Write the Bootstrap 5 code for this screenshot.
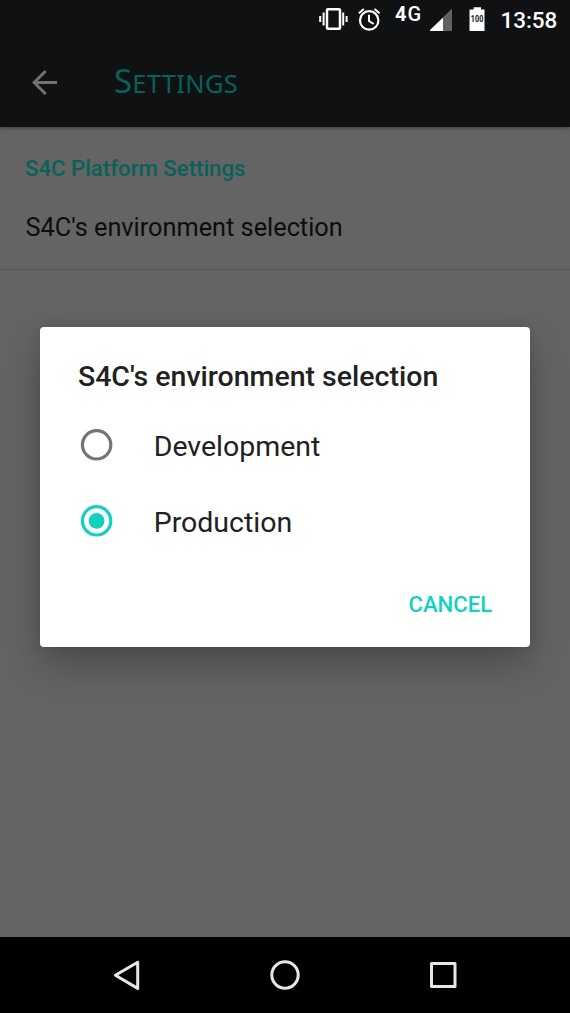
<!DOCTYPE html>
<html lang="en">
<head>
<meta charset="utf-8">
<meta name="viewport" content="width=device-width, initial-scale=1">
<title>Settings</title>
<link href="https://cdn.jsdelivr.net/npm/bootstrap@5.3.0/dist/css/bootstrap.min.css" rel="stylesheet">
<style>
body{font-family:Roboto,sans-serif;background:#646464;color:#212121;height:1013px;overflow:hidden}
svg{display:block;flex:none}
.screen{width:570px;height:1013px}
.status-bar{height:38px;padding-left:318.5px;color:#fff}
.app-head{background:#0f1113;box-shadow:0 1px 4px rgba(0,0,0,.4);height:126.5px}
.net-type{font:500 20px/22px Roboto,sans-serif;margin:3px 0 0 13.5px;letter-spacing:1px;width:35px}
.net-type b{font-weight:700}
.clock{font:500 22.5px/38px Roboto,sans-serif;margin:.5px 0 0 15.5px;letter-spacing:-.1px}
.tool-bar{height:88px;padding-left:32px}
.page-title{font:400 33px/88px "Noto Sans",sans-serif;color:#08625a;margin-left:56px}
.page-title span{font-size:25.5px;letter-spacing:.35px}
.section-title{font-size:22.2px;line-height:30px;font-weight:500;color:#08625a;padding:26px 25px 0}
.pref-row{font-size:25.3px;line-height:40px;color:#0d0d0d;padding:25px 25.5px 21px;border-bottom:1px solid #565656}
.nav-keys{height:76px;background:#000}
.choice-dialog{left:39.6px;top:327px;width:490.8px;height:320.3px;border:0;border-radius:4px;background:#fff;padding:32px 38.3px 0;box-shadow:0 18px 38px rgba(0,0,0,.25),0 0 12px rgba(0,0,0,.1)}
.dialog-heading{font-size:28.5px;line-height:36px;font-weight:500;margin:0 0 13px}
.choice{height:76px;font-size:28.5px;line-height:40px;cursor:pointer}
.choice-text{margin-left:39.8px;padding-top:1px}
.cancel-key{font-size:22.1px;line-height:30px;font-weight:500;color:#13d1be;border:0;padding:0;margin-top:28.5px}
.t{white-space:nowrap;display:inline-block}
</style>
</head>
<body>
<div class="screen position-relative d-flex flex-column">
  <header class="app-head flex-shrink-0">
    <div class="status-bar d-flex">
      <svg width="29" height="38" viewBox="0 0 29 38" fill="none" stroke="#fff" stroke-width="2"><rect x="8" y="9.3" width="13" height="19.4" rx="1" stroke-width="2.5"/><path d="M4.600 12.500v13M1.200 16v6M24.200 12.500v13M27.600 16v6"/></svg>
      <svg class="ms-2" width="26" height="38" viewBox="0 0 26 38" fill="none" stroke="#fff" stroke-width="2.2"><circle cx="13.2" cy="20.4" r="9.2"/><path d="M13 14.800v6.200l4.700 3M2.800 13.200l5-4.200M23.600 13.200l-5-4.200" stroke-width="2"/></svg>
      <span class="net-type"><b>4</b>G</span>
      <svg width="23" height="38" viewBox="0 0 23 38"><path d="M22 8.500V31H-1z" fill="#606162"/><path d="M13 17.700v13.300H-1z" fill="#fff"/></svg>
      <svg class="ms-3" width="16" height="38" viewBox="0 0 16 38"><path d="M4.700 7.300h7.300v2.100H15.500V31H.5V9.400h4.200z" fill="#fff"/><text x="8.1" y="22" font-family="Roboto,sans-serif" font-size="8.5" font-weight="700" fill="#111" text-anchor="middle" textLength="12.5" lengthAdjust="spacingAndGlyphs">100</text></svg>
      <span class="clock">13:58</span>
    </div>
    <div class="tool-bar d-flex align-items-center">
      <svg width="26" height="26" viewBox="0 0 26 26" fill="none" stroke="#717272" stroke-width="3"><path d="M25 13.500H2M13.700 2L2.200 13.500 13.700 25"/></svg>
      <h1 class="page-title mb-0">S<span>ETTINGS</span></h1>
    </div>
  </header>
  <main class="flex-grow-1">
    <div class="section-title"><span class="t">S4C Platform Settings</span></div>
    <div class="pref-row"><span class="t">S4C's environment selection</span></div>
  </main>
  <footer class="nav-keys flex-shrink-0 d-flex align-items-center">
    <svg width="570" height="76" viewBox="0 0 570 76" fill="none" stroke="#e6e6e6" stroke-width="3" stroke-linejoin="round"><path d="M137.700 25.200v26.200L115.400 38.300z"/><circle cx="285" cy="38" r="13.2"/><rect x="431.5" y="26.5" width="23.5" height="23"/></svg>
  </footer>

  <section class="choice-dialog modal-content position-absolute d-flex flex-column" role="dialog">
    <h2 class="dialog-heading"><span class="t">S4C's environment selection</span></h2>
    <div class="choice d-flex align-items-center">
      <svg width="36" height="36" viewBox="0 0 36 36" fill="none" stroke="#757575" stroke-width="3.2"><circle cx="18.6" cy="16.8" r="14.2"/></svg>
      <span class="t choice-text">Development</span>
    </div>
    <div class="choice d-flex align-items-center">
      <svg width="36" height="36" viewBox="0 0 36 36" fill="none" stroke="#13d1be" stroke-width="3.2"><circle cx="18.6" cy="16.8" r="14.2"/><circle cx="18.6" cy="16.8" r="7.9" fill="#13d1be" stroke="none"/></svg>
      <span class="t choice-text">Production</span>
    </div>
    <button class="btn cancel-key align-self-end" type="button"><span class="t">CANCEL</span></button>
  </section>
</div>
<script src="https://cdn.jsdelivr.net/npm/bootstrap@5.3.0/dist/js/bootstrap.bundle.min.js"></script>
</body>
</html>
